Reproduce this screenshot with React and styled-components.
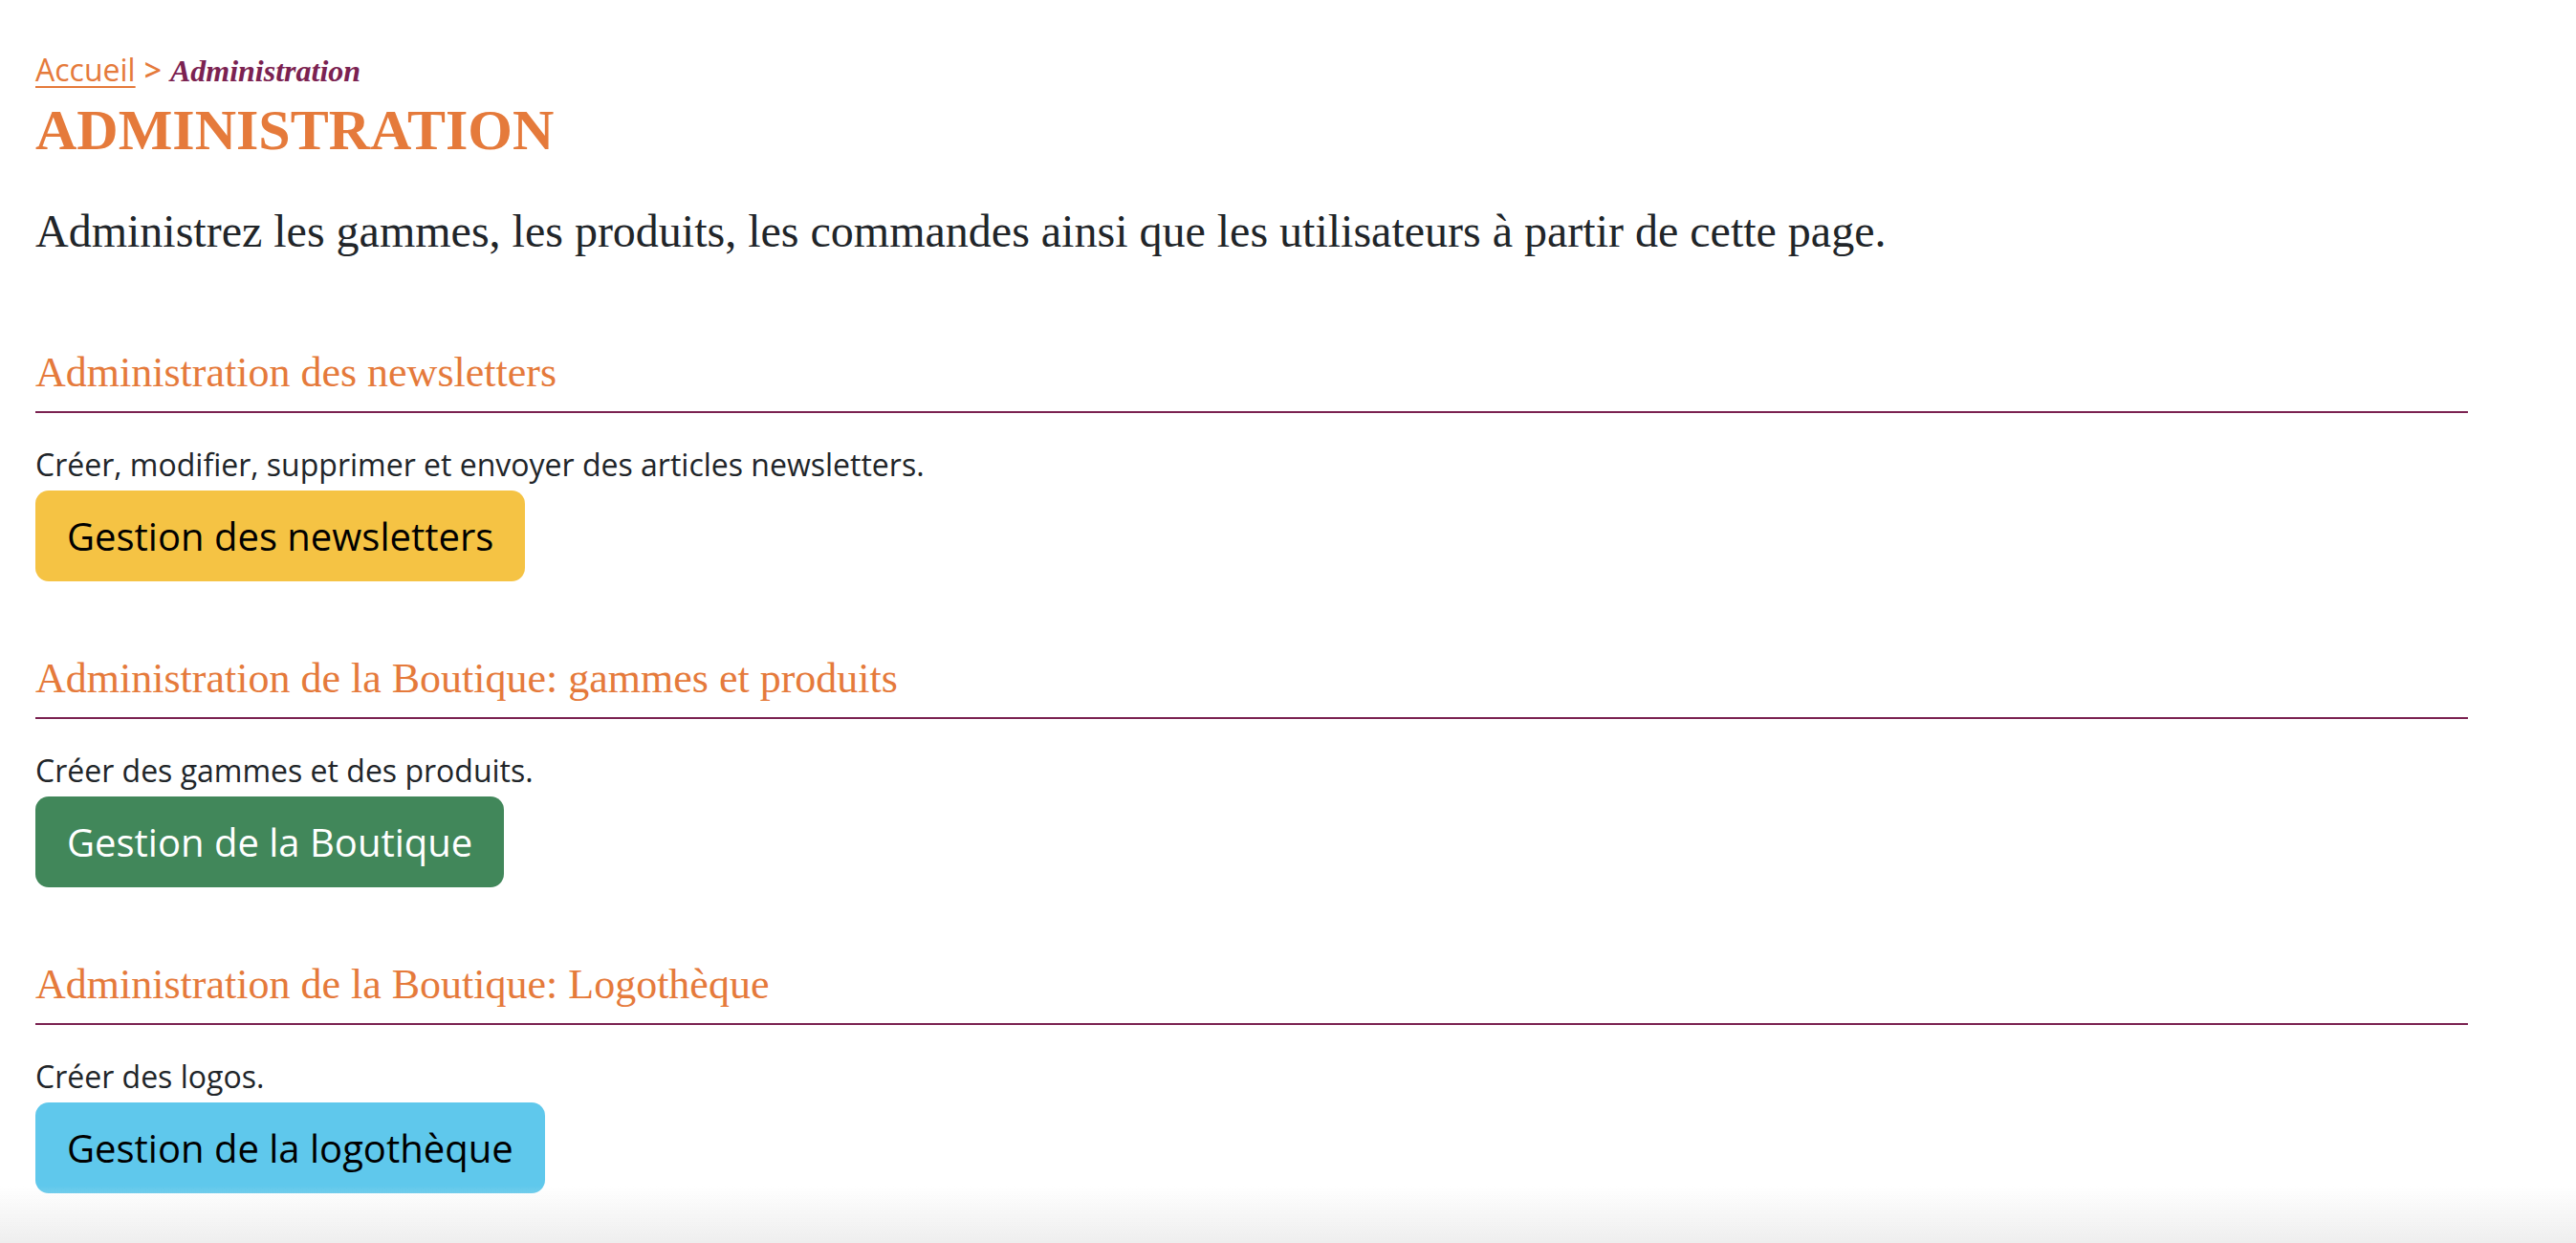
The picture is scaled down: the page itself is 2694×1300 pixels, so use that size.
import styled, { createGlobalStyle } from "styled-components";

const GlobalStyle = createGlobalStyle`
  html, body {
    margin: 0;
    padding: 0;
    background: #ffffff;
  }
  body {
    font-family: "Open Sans", "Liberation Sans", sans-serif;
    color: #212529;
  }
  * {
    box-sizing: border-box;
  }
`;

const Page = styled.div`
  width: 100%;
  min-height: 1300px;
  padding: 49px 0 0 37px;
`;

const Container = styled.main`
  width: 2544px;
`;

const Breadcrumb = styled.nav`
  font-family: "Open Sans", sans-serif;
  font-size: 32px;
  line-height: 48px;
  color: #e57a3b;
`;

const Crumb = styled.a`
  color: #e57a3b;
  text-decoration: underline;
  text-underline-offset: 5px;
  text-decoration-thickness: 2px;
`;

const Sep = styled.span`
  font-weight: 600;
  margin: 0 9px;
`;

const Current = styled.span`
  font-family: "Liberation Serif", "Times New Roman", serif;
  font-style: italic;
  font-weight: 700;
  color: #7b2251;
`;

const Title = styled.h1`
  margin: 2px 0 0;
  font-family: "Liberation Serif", "Times New Roman", serif;
  font-size: 60px;
  line-height: 72px;
  font-weight: 700;
  color: #e57a3b;
`;

const Intro = styled.p`
  margin: 34px 0 0;
  font-family: "Liberation Serif", "Times New Roman", serif;
  font-size: 48px;
  line-height: 72px;
  color: #212529;
`;

const Section = styled.section`
  margin-top: ${(p) => (p.$first ? "85px" : "75px")};
`;

const SectionTitle = styled.h2`
  margin: 0;
  padding-bottom: 14px;
  border-bottom: 2px solid #7b2251;
  font-family: "Liberation Serif", "Times New Roman", serif;
  font-size: 44px;
  line-height: 53px;
  font-weight: 400;
  color: #e57a3b;
`;

const Desc = styled.p`
  margin: 30px 0 3px;
  font-size: 32px;
  line-height: 48px;
  color: #212529;
`;

const Button = styled.a`
  display: inline-flex;
  align-items: center;
  height: 95px;
  padding: 0 33px;
  border-radius: 14px;
  background: ${(p) => p.$bg};
  color: ${(p) => p.$fg};
  font-family: "Open Sans", sans-serif;
  font-size: 40px;
  line-height: 60px;
  text-decoration: none;
`;

const BottomShade = styled.div`
  position: fixed;
  left: 0;
  right: 0;
  bottom: 0;
  height: 60px;
  pointer-events: none;
  background: linear-gradient(to bottom, rgba(239, 239, 239, 0), #eeeeee);
`;

const sections = [
  {
    title: "Administration des newsletters",
    desc: "Créer, modifier, supprimer et envoyer des articles newsletters.",
    label: "Gestion des newsletters",
    bg: "#f5c344",
    fg: "#000000",
  },
  {
    title: "Administration de la Boutique: gammes et produits",
    desc: "Créer des gammes et des produits.",
    label: "Gestion de la Boutique",
    bg: "#41875a",
    fg: "#ffffff",
  },
  {
    title: "Administration de la Boutique: Logothèque",
    desc: "Créer des logos.",
    label: "Gestion de la logothèque",
    bg: "#5fc8ec",
    fg: "#000000",
  },
];

export default function App() {
  return (
    <Page>
      <GlobalStyle />
      <Container>
        <Breadcrumb>
          <Crumb href="#">Accueil</Crumb>
          <Sep>&gt;</Sep>
          <Current>Administration</Current>
        </Breadcrumb>
        <Title>ADMINISTRATION</Title>
        <Intro>
          Administrez les gammes, les produits, les commandes ainsi que les
          utilisateurs à partir de cette page.
        </Intro>

        {sections.map((s, i) => (
          <Section key={s.title} $first={i === 0}>
            <SectionTitle>{s.title}</SectionTitle>
            <Desc>{s.desc}</Desc>
            <Button href="#" $bg={s.bg} $fg={s.fg}>
              {s.label}
            </Button>
          </Section>
        ))}
      </Container>
      <BottomShade />
    </Page>
  );
}
